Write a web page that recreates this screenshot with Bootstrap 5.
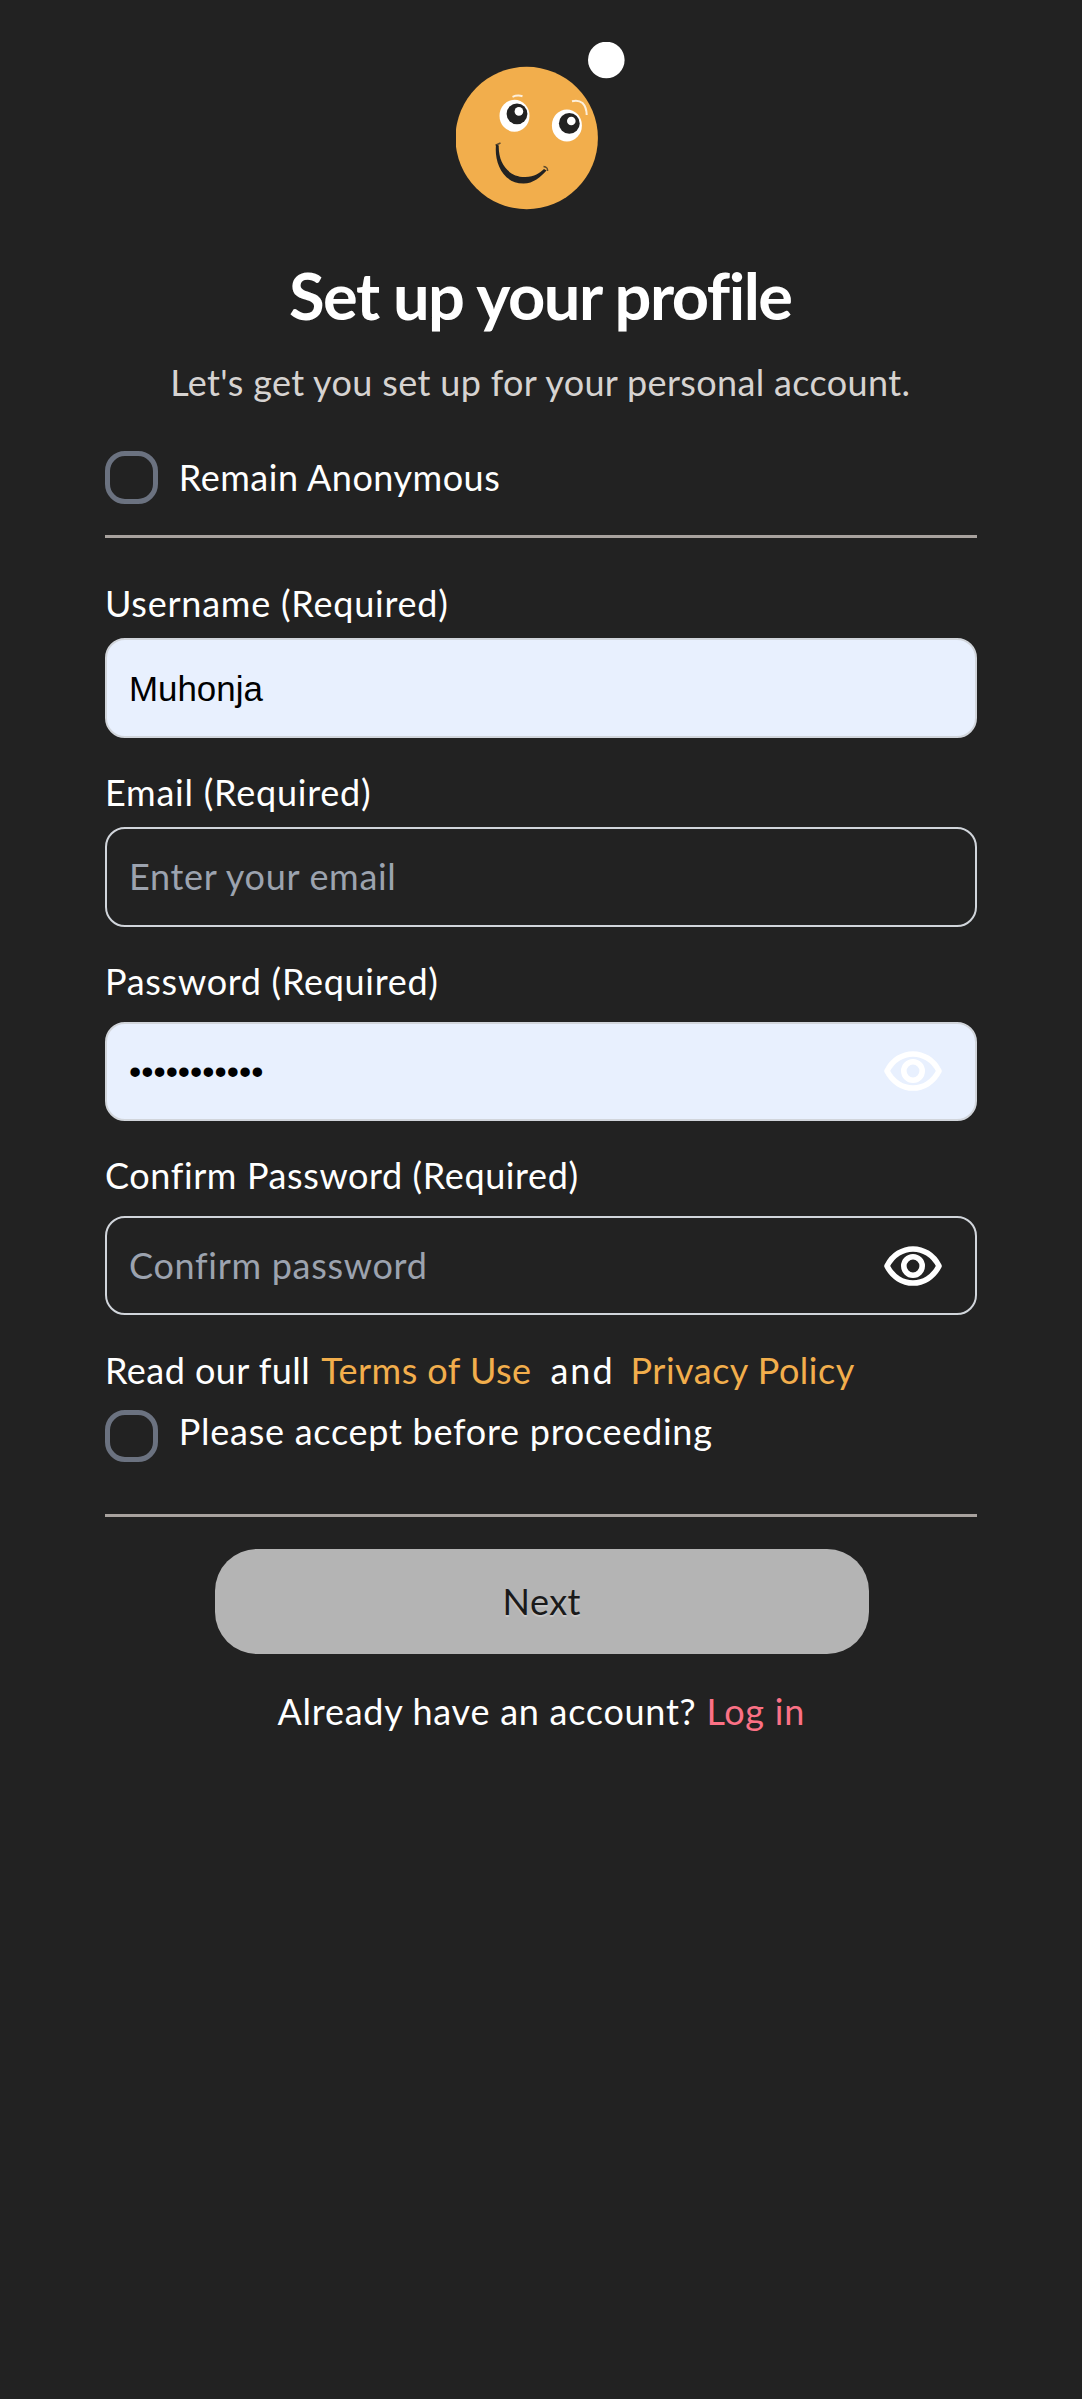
<!DOCTYPE html>
<html lang="en">
<head>
<meta charset="utf-8">
<meta name="viewport" content="width=device-width, initial-scale=1">
<title>Set up your profile</title>
<link href="https://cdn.jsdelivr.net/npm/bootstrap@5.3.0/dist/css/bootstrap.min.css" rel="stylesheet">
<style>
html{background:#fff}
body{background:#222;color:#fff;font:36px/44px Lato,"Liberation Sans",sans-serif;min-height:2399px;letter-spacing:.8px}
.page{padding:42px 105.5px 0 105px}
.face{width:169px;height:168px}
.title{font-size:65px;line-height:80px;font-weight:700;letter-spacing:-1.5px;margin:44.5px 0 25px;padding-right:1px}
.sub{color:#d6d3d1;letter-spacing:.35px;margin:0 0 47.5px -1px}
.tick{appearance:none;flex:none;width:52.8px;height:52.8px;margin:0;border:5.4px solid #6b7280;border-radius:20px;background:none}
.tick-row{gap:21px}
.tick-row label{letter-spacing:.74px}
.tick-row .accept{margin-top:-1px}
.tick-row .anon{letter-spacing:.51px;padding-top:4px}
.rule{height:3px;background:#a8a29e}
.rule-top{margin:31.2px 0 43.5px}
.rule-end{margin:52px 0 31.3px}
.cap{display:block;margin:0 0 13px;letter-spacing:.76px}
.cap-pw{margin-bottom:18.3px;letter-spacing:.7px}
.cap-long{letter-spacing:.6px}
.field{display:block;width:100%;height:99.7px;border:2.6px solid #d1d5db;border-radius:20px;background:transparent;padding:0 22px 2px;color:#fff;font:36px Lato,sans-serif;outline:0}
.field::placeholder{color:#9ca3af;opacity:1;letter-spacing:.7px}
.field.filled{background:#e8f0fe;color:#000;font:34.9px "Liberation Sans",sans-serif;letter-spacing:0;padding:2px 22px 0}
.mb-field{margin-bottom:32.2px}
.eye{position:absolute;right:31.5px;top:50%;transform:translateY(-50%);width:64px;height:46px}
.legal{margin:0 0 18px}
.legal span:first-child{letter-spacing:.45px}
.amber{color:#f2ae4c;text-decoration:none}
.next{width:654px;height:105px;border:0;border-radius:42px;background:#b4b4b4;color:#1a1a1a;letter-spacing:.46px;text-shadow:0 2px 1px #c9c9c9;margin-left:2px}
.signin{margin:35px 0 0 1px;letter-spacing:.74px}
.rose{color:#fb7185;text-decoration:none}
.ms-terms{margin-left:11px;letter-spacing:.45px}
.ms-and{margin-left:19px;letter-spacing:2px}
.ms-pol{margin-left:16px;letter-spacing:.5px}
</style>
</head>
<body>
<main class="page d-flex flex-column">
  <svg class="face align-self-center" viewBox="456.5 42 169 168">
    <circle cx="527.2" cy="138" r="71.2" fill="#f2ae4c"/>
    <circle cx="606.8" cy="60" r="18.3" fill="#fff"/>
    <ellipse cx="515" cy="115.7" rx="15" ry="16" fill="#fff"/>
    <circle cx="517.5" cy="113.8" r="10.4" fill="#222"/>
    <circle cx="519.4" cy="111.4" r="4.3" fill="#fff"/>
    <ellipse cx="567.4" cy="125.4" rx="15" ry="16" fill="#fff"/>
    <circle cx="569.8" cy="123.4" r="10.4" fill="#222"/>
    <circle cx="571.8" cy="121" r="4.3" fill="#fff"/>
    <path d="M513 96.8Q518 94.6 523 96.2M572.5 101.2Q579 99.6 583 103Q587 107 587.2 115" fill="none" stroke="#fff" stroke-opacity=".8" stroke-width="2"/>
    <path d="M496.6 144.5C494.5 160 502 183.4 524 183.6C534 183.5 541 177 547 170.5L544.5 169C540 173 535 176.8 526 177C509 177.5 498.5 163 499.3 145.5Z" fill="#222"/>
    <path d="M496 145.3L501 143M544 166.5Q548.5 167 548 171" fill="none" stroke="#222" stroke-opacity=".7" stroke-width="1.5"/>
  </svg>
  <h1 class="title text-center">Set up your profile</h1>
  <p class="sub text-center">Let's get you set up for your personal account.</p>

  <form class="d-flex flex-column">
    <div class="tick-row d-flex align-items-start">
      <input class="tick" type="checkbox" id="anon"><label class="anon" for="anon">Remain Anonymous</label>
    </div>
    <div class="rule rule-top"></div>

    <label class="cap" for="user">Username (Required)</label>
    <input class="field filled mb-field" id="user" type="text" value="Muhonja">

    <label class="cap" for="email">Email (Required)</label>
    <input class="field mb-field" id="email" type="email" placeholder="Enter your email">

    <label class="cap cap-pw" for="pw">Password (Required)</label>
    <div class="position-relative mb-field">
      <input class="field filled" id="pw" type="password" value="anonymous12">
      <svg class="eye" viewBox="-32 -23 64 46" fill="none" stroke="#fff" stroke-width="5.6" stroke-linejoin="round"><path d="M-26 0C-14.5-22.7 14.5-22.7 26 0C14.5 22.7-14.5 22.7-26 0Z"/><circle r="9.2"/></svg>
    </div>

    <label class="cap cap-pw cap-long" for="pw2">Confirm Password (Required)</label>
    <div class="position-relative mb-field">
      <input class="field" id="pw2" type="password" placeholder="Confirm password">
      <svg class="eye" viewBox="-32 -23 64 46" fill="none" stroke="#fff" stroke-width="5.6" stroke-linejoin="round"><path d="M-26 0C-14.5-22.7 14.5-22.7 26 0C14.5 22.7-14.5 22.7-26 0Z"/><circle r="9.2"/></svg>
    </div>

    <div class="legal d-flex"><span>Read our full</span><a class="amber ms-terms" href="#">Terms of Use</a><span class="ms-and">and</span><a class="amber ms-pol" href="#">Privacy Policy</a></div>
    <div class="tick-row d-flex align-items-start">
      <input class="tick" type="checkbox" id="accept"><label class="accept" for="accept">Please accept before proceeding</label>
    </div>
    <div class="rule rule-end"></div>

    <button class="next align-self-center" type="button">Next</button>
  </form>
  <p class="signin text-center">Already have an account? <a class="rose" href="#">Log in</a></p>
</main>
<script src="https://cdn.jsdelivr.net/npm/bootstrap@5.3.0/dist/js/bootstrap.bundle.min.js"></script>
</body>
</html>
